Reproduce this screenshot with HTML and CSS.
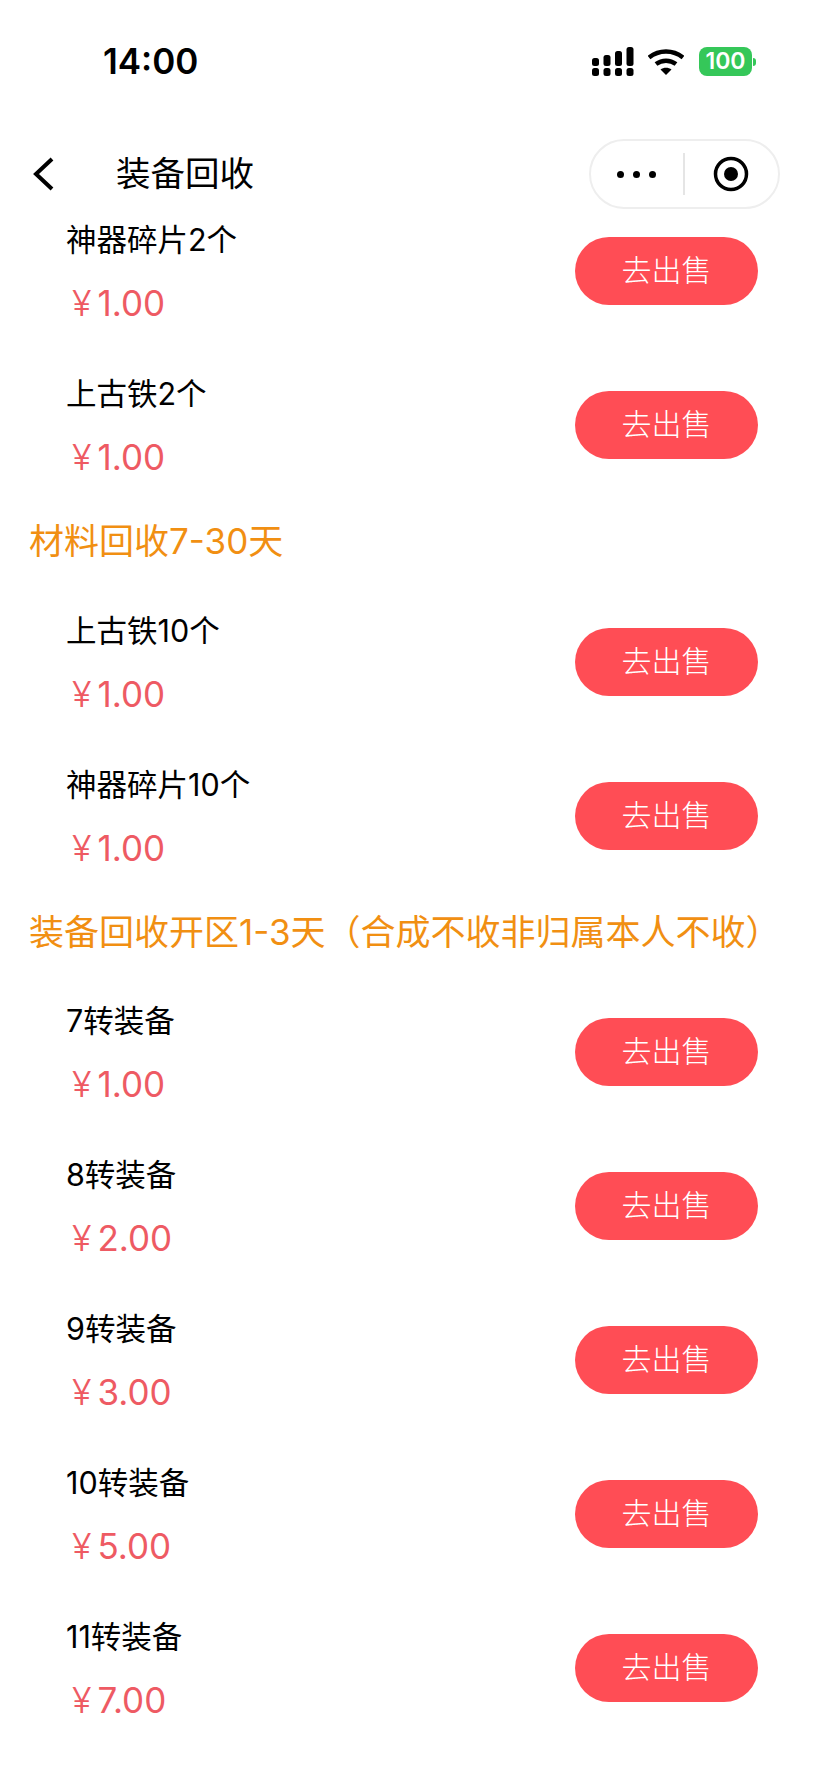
FILE: index.html
```html
<!DOCTYPE html>
<html lang="zh-CN">
<head>
    <meta charset="UTF-8">
    <title>装备回收</title>
    <link rel="stylesheet" href="styles.css">
</head>
<body>

<div class="status-bar">
    <span class="time">14:00</span>
    <div class="status-icons">
        <svg class="signal" width="42" height="29" viewBox="0 0 42 29">
            <g fill="#000">
                <rect x="0" y="11" width="7" height="8" rx="2.5"/>
                <rect x="0" y="21" width="7" height="8" rx="2.5"/>
                <rect x="11.500" y="8" width="7" height="11" rx="2.5"/>
                <rect x="11.500" y="21" width="7" height="8" rx="2.5"/>
                <rect x="23" y="4" width="7" height="15" rx="2.5"/>
                <rect x="23" y="21" width="7" height="8" rx="2.5"/>
                <rect x="34.500" y="0" width="7" height="19" rx="2.5"/>
                <rect x="34.500" y="21" width="7" height="8" rx="2.5"/>
            </g>
        </svg>
        <svg class="wifi" width="36" height="28" viewBox="0 0 36 28">
            <path d="M1 9.500C11 1.500 25 1.500 35 9.500" fill="none" stroke="#000" stroke-width="4.500"/>
            <path d="M8 16C14 11.500 22 11.500 28 16" fill="none" stroke="#000" stroke-width="4.500"/>
            <path d="M12.500 21.500C15.500 19.300 20.500 19.300 23.500 21.500L18 27Z" fill="#000"/>
        </svg>
        <div class="battery">
            <span class="battery-level">100</span>
            <span class="battery-tip"></span>
        </div>
    </div>
</div>

<div class="nav-bar">
    <svg class="back" width="24" height="36" viewBox="0 0 24 36">
        <path d="M20 3L4 18L20 33" fill="none" stroke="#000" stroke-width="4"/>
    </svg>
    <span class="nav-title">装备回收</span>
    <div class="capsule">
        <div class="capsule-dots"><i></i><i></i><i></i></div>
        <div class="capsule-line"></div>
        <svg width="36" height="36" viewBox="0 0 36 36">
            <circle cx="18" cy="18" r="15.500" fill="none" stroke="#000" stroke-width="3.500"/>
            <circle cx="18" cy="18" r="7" fill="#000"/>
        </svg>
    </div>
</div>

<div class="list">
    <div class="item">
        <div class="item-info"><div class="item-name">神器碎片2个</div><div class="item-price"><span class="yen">¥</span>1.00</div></div>
        <div class="sell-btn">去出售</div>
    </div>
    <div class="item">
        <div class="item-info"><div class="item-name">上古铁2个</div><div class="item-price"><span class="yen">¥</span>1.00</div></div>
        <div class="sell-btn">去出售</div>
    </div>

    <div class="group-title">材料回收7-30天</div>
    <div class="item">
        <div class="item-info"><div class="item-name">上古铁10个</div><div class="item-price"><span class="yen">¥</span>1.00</div></div>
        <div class="sell-btn">去出售</div>
    </div>
    <div class="item">
        <div class="item-info"><div class="item-name">神器碎片10个</div><div class="item-price"><span class="yen">¥</span>1.00</div></div>
        <div class="sell-btn">去出售</div>
    </div>

    <div class="group-title">装备回收开区1-3天（合成不收非归属本人不收）</div>
    <div class="item">
        <div class="item-info"><div class="item-name">7转装备</div><div class="item-price"><span class="yen">¥</span>1.00</div></div>
        <div class="sell-btn">去出售</div>
    </div>
    <div class="item">
        <div class="item-info"><div class="item-name">8转装备</div><div class="item-price"><span class="yen">¥</span>2.00</div></div>
        <div class="sell-btn">去出售</div>
    </div>
    <div class="item">
        <div class="item-info"><div class="item-name">9转装备</div><div class="item-price"><span class="yen">¥</span>3.00</div></div>
        <div class="sell-btn">去出售</div>
    </div>
    <div class="item">
        <div class="item-info"><div class="item-name">10转装备</div><div class="item-price"><span class="yen">¥</span>5.00</div></div>
        <div class="sell-btn">去出售</div>
    </div>
    <div class="item">
        <div class="item-info"><div class="item-name">11转装备</div><div class="item-price"><span class="yen">¥</span>7.00</div></div>
        <div class="sell-btn">去出售</div>
    </div>
</div>

</body>
</html>
```

FILE: styles.css
```css
:root {
    --red: #ff4d55;
    --price: #ee5a63;
    --orange: #f18f12;
}

* {
    box-sizing: border-box;
}

body {
    margin: 0;
    background: #fff;
    color: #000;
    font-family: Inter, "Noto Sans CJK SC", sans-serif;
}

.status-bar {
    height: 139px;
    padding: 38px 0 0 103px;
    display: flex;
    align-items: flex-start;
    justify-content: space-between;
}

.time {
    font-size: 35px;
    font-weight: 600;
    line-height: 46px;
}

.status-icons {
    display: flex;
    align-items: center;
    gap: 14px;
    padding: 9px 68px 0 0;
}

.battery {
    display: flex;
    align-items: center;
    margin-left: 1px;
}

.battery-level {
    width: 53px;
    height: 29px;
    border-radius: 8px;
    background: #35c759;
    color: #fff;
    font-size: 23px;
    font-weight: 600;
    line-height: 29px;
    text-align: center;
}

.battery-tip {
    width: 3px;
    height: 8px;
    margin-left: 1px;
    border-radius: 0 4px 4px 0;
    background: #35c759;
}

.nav-bar {
    position: relative;
    height: 70px;
    margin-bottom: -15px;
    display: flex;
    align-items: center;
    padding-left: 32px;
}

.back {
    flex: none;
}

.nav-title {
    margin-left: 60px;
    font-size: 34.500px;
    line-height: 46px;
}

.capsule {
    margin-left: auto;
    margin-right: 44px;
    width: 191px;
    height: 70px;
    border: 2px solid #eeeeee;
    border-radius: 35px;
    background: #fff;
    display: flex;
    align-items: center;
    padding-left: 26px;
}

.capsule-dots {
    display: flex;
    gap: 9px;
    width: 39px;
}

.capsule-dots i {
    flex: none;
    width: 7px;
    height: 7px;
    border-radius: 50%;
    background: #000;
}

.capsule-line {
    width: 2px;
    height: 42px;
    margin: 0 28px 0 27px;
    background: #e5e5e5;
}

.list {
    padding: 0 66px 0 0;
}

.item {
    height: 154px;
    display: flex;
    align-items: center;
    justify-content: space-between;
    padding-left: 66px;
}

.item-info {
    padding-top: 2px;
}

.item-name {
    font-size: 30.500px;
    line-height: 41px;
}

.item-price {
    margin: 21px 0 0 6px;
    font-size: 35px;
    line-height: 44px;
    color: var(--price);
}

.yen {
    margin-right: 6px;
    font-size: 36px;
    font-weight: 300;
}

.sell-btn {
    width: 183px;
    height: 68px;
    border-radius: 34px;
    background: var(--red);
    color: #fff;
    font-size: 30px;
    font-weight: 300;
    line-height: 66px;
    text-align: center;
}

.group-title {
    height: 82.500px;
    padding: 0 0 0 29px;
    margin-right: -66px;
    font-size: 35px;
    line-height: 79px;
    color: var(--orange);
    white-space: nowrap;
}
```
